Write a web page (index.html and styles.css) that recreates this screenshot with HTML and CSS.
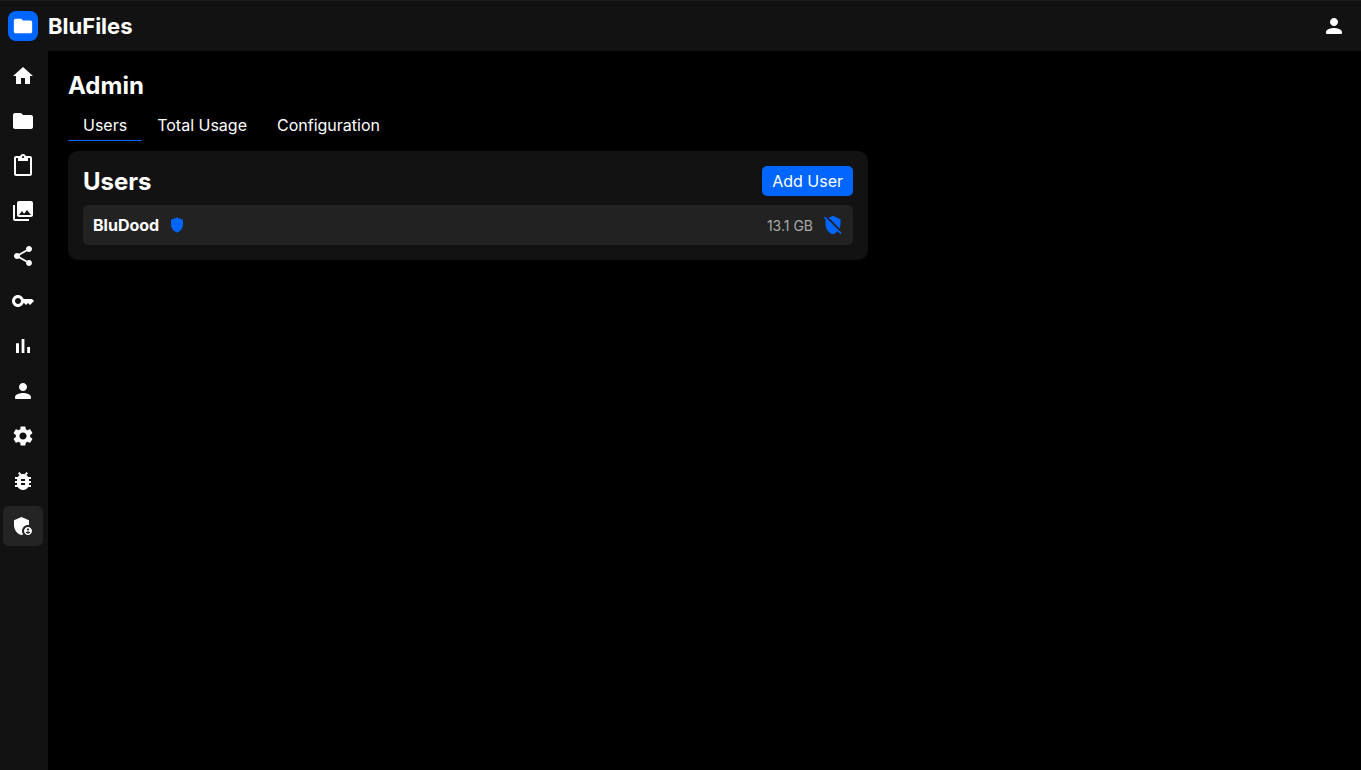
FILE: index.html
```html
<!DOCTYPE html>
<html lang="en">
<head>
    <meta charset="UTF-8">
    <meta name="viewport" content="width=device-width, initial-scale=1.0">
    <title>BluFiles Admin</title>
    <link rel="stylesheet" href="styles.css">
</head>
<body>
    <header class="topbar">
        <div class="brand">
            <div class="brand-logo">
                <svg viewBox="0 0 24 24"><path d="M10 4H4c-1.1 0-1.99.9-1.99 2L2 18c0 1.1.9 2 2 2h16c1.1 0 2-.9 2-2V8c0-1.1-.9-2-2-2h-8l-2-2z"/></svg>
            </div>
            <span class="brand-name">BluFiles</span>
        </div>
        <button class="account-btn">
            <svg viewBox="0 0 24 24"><path d="M12 12c2.21 0 4-1.79 4-4s-1.79-4-4-4-4 1.79-4 4 1.79 4 4 4zm0 2c-2.67 0-8 1.34-8 4v1c0 .55.45 1 1 1h14c.55 0 1-.45 1-1v-1c0-2.66-5.33-4-8-4z"/></svg>
        </button>
    </header>
    <div class="layout">
        <nav class="sidebar">
            <a class="nav-item"><svg viewBox="0 0 24 24"><path d="M10 20v-6h4v6h5v-8h3L12 3 2 12h3v8z"/></svg></a>
            <a class="nav-item"><svg viewBox="0 0 24 24"><path d="M10 4H4c-1.1 0-1.99.9-1.99 2L2 18c0 1.1.9 2 2 2h16c1.1 0 2-.9 2-2V8c0-1.1-.9-2-2-2h-8l-2-2z"/></svg></a>
            <a class="nav-item"><svg viewBox="0 0 24 24"><path d="M19 2h-4.18C14.4.84 13.3 0 12 0S9.6.84 9.18 2H5c-1.1 0-2 .9-2 2v16c0 1.1.9 2 2 2h14c1.1 0 2-.9 2-2V4c0-1.1-.9-2-2-2zm-7 0c.55 0 1 .45 1 1s-.45 1-1 1-1-.45-1-1 .45-1 1-1zm7 18H5V4h2v3h10V4h2v16z"/></svg></a>
            <a class="nav-item"><svg viewBox="0 0 24 24"><path d="M22 16V4c0-1.1-.9-2-2-2H8c-1.1 0-2 .9-2 2v12c0 1.1.9 2 2 2h12c1.1 0 2-.9 2-2zm-11-4l2.03 2.71L16 11l4 5H8l3-4zM2 6v14c0 1.1.9 2 2 2h14v-2H4V6H2z"/></svg></a>
            <a class="nav-item"><svg viewBox="0 0 24 24"><path d="M18 16.08c-.76 0-1.44.3-1.96.77L8.91 12.7c.05-.23.09-.46.09-.7s-.04-.47-.09-.7l7.05-4.11c.54.5 1.25.81 2.04.81 1.66 0 3-1.34 3-3s-1.34-3-3-3-3 1.34-3 3c0 .24.04.47.09.7L8.04 9.81C7.5 9.31 6.79 9 6 9c-1.66 0-3 1.34-3 3s1.34 3 3 3c.79 0 1.5-.31 2.04-.81l7.12 4.16c-.05.21-.08.43-.08.65 0 1.61 1.31 2.92 2.92 2.92s2.92-1.31 2.92-2.92-1.31-2.92-2.92-2.92z"/></svg></a>
            <a class="nav-item"><svg viewBox="0 0 24 24"><path d="M21 10h-8.35C11.83 7.67 9.61 6 7 6c-3.31 0-6 2.69-6 6s2.69 6 6 6c2.61 0 4.83-1.67 5.65-4H13l2 2 2-2 2 2 4-4.04L21 10zM7 15c-1.65 0-3-1.35-3-3s1.35-3 3-3 3 1.35 3 3-1.35 3-3 3z"/></svg></a>
            <a class="nav-item"><svg viewBox="0 0 24 24"><path d="M5 9.2h3V19H5zM10.6 5h2.8v14h-2.8zm5.6 8H19v6h-2.8z"/></svg></a>
            <a class="nav-item"><svg viewBox="0 0 24 24"><path d="M12 12c2.21 0 4-1.79 4-4s-1.79-4-4-4-4 1.79-4 4 1.79 4 4 4zm0 2c-2.67 0-8 1.34-8 4v1c0 .55.45 1 1 1h14c.55 0 1-.45 1-1v-1c0-2.66-5.33-4-8-4z"/></svg></a>
            <a class="nav-item"><svg viewBox="0 0 24 24"><path d="M19.14 12.94c.04-.3.06-.61.06-.94 0-.32-.02-.64-.07-.94l2.03-1.58c.18-.14.23-.41.12-.61l-1.92-3.32c-.12-.22-.37-.29-.59-.22l-2.39.96c-.5-.38-1.03-.7-1.62-.94l-.36-2.54c-.04-.24-.24-.41-.48-.41h-3.84c-.24 0-.43.17-.47.41l-.36 2.54c-.59.24-1.13.57-1.62.94l-2.39-.96c-.22-.08-.47 0-.59.22L2.74 8.87c-.12.21-.08.47.12.61l2.03 1.58c-.05.3-.09.63-.09.94s.02.64.07.94l-2.03 1.58c-.18.14-.23.41-.12.61l1.92 3.32c.12.22.37.29.59.22l2.39-.96c.5.38 1.03.7 1.62.94l.36 2.54c.05.24.24.41.48.41h3.84c.24 0 .44-.17.47-.41l.36-2.54c.59-.24 1.13-.56 1.62-.94l2.39.96c.22.08.47 0 .59-.22l1.92-3.32c.12-.22.07-.47-.12-.61l-2.01-1.58zM12 15.6c-1.98 0-3.6-1.62-3.6-3.6s1.62-3.6 3.6-3.6 3.6 1.62 3.6 3.6-1.62 3.6-3.6 3.6z"/></svg></a>
            <a class="nav-item"><svg viewBox="0 0 24 24"><path d="M20 8h-2.81c-.45-.78-1.07-1.45-1.82-1.96L17 4.41 15.59 3l-2.17 2.17C12.96 5.06 12.49 5 12 5c-.49 0-.96.06-1.41.17L8.41 3 7 4.41l1.62 1.63C7.88 6.55 7.26 7.22 6.81 8H4v2h2.09c-.05.33-.09.66-.09 1v1H4v2h2v1c0 .34.04.67.09 1H4v2h2.81c1.04 1.79 2.97 3 5.19 3s4.15-1.21 5.19-3H20v-2h-2.09c.05-.33.09-.66.09-1v-1h2v-2h-2v-1c0-.34-.04-.67-.09-1H20V8zm-6 8h-4v-2h4v2zm0-4h-4v-2h4v2z"/></svg></a>
            <a class="nav-item active"><svg viewBox="0 0 24 24"><path d="M17 11c.34 0 .67.04 1 .09V6.27L10.5 3 3 6.27v4.91c0 4.54 3.2 8.79 7.5 9.82.55-.13 1.08-.32 1.6-.55-.69-.98-1.1-2.17-1.1-3.45 0-3.31 2.69-6 6-6z"/><path d="M17 13c-2.21 0-4 1.79-4 4s1.79 4 4 4 4-1.79 4-4-1.79-4-4-4zm0 1.38c.62 0 1.12.51 1.12 1.12s-.51 1.12-1.12 1.12-1.12-.51-1.12-1.12.5-1.12 1.12-1.12zm0 5.37c-.93 0-1.74-.46-2.24-1.17.05-.72 1.51-1.08 2.24-1.08s2.19.36 2.24 1.08c-.5.71-1.31 1.17-2.24 1.17z"/></svg></a>
        </nav>
        <main class="content">
            <h1 class="page-title">Admin</h1>
            <div class="tabs">
                <button class="tab active">Users</button>
                <button class="tab">Total Usage</button>
                <button class="tab">Configuration</button>
            </div>
            <section class="card">
                <div class="card-header">
                    <h2>Users</h2>
                    <button class="add-btn">Add User</button>
                </div>
                <div class="user-row">
                    <div class="user-info">
                        <span class="user-name">BluDood</span>
                        <svg class="badge-icon" viewBox="0 0 24 24"><path d="M12 2L4 5v6.09c0 5.05 3.41 9.76 8 10.91 4.59-1.15 8-5.86 8-10.91V5l-8-3z"/></svg>
                    </div>
                    <div class="user-meta">
                        <span class="user-usage">13.1 GB</span>
                        <svg class="remove-icon" viewBox="0 0 24 24"><path d="M22.27 21.73l-3.54-3.55L5.78 5.23 2.27 1.72 1 2.99 3.01 5H3v6c0 5.55 3.84 10.74 9 12 2.16-.53 4.08-1.76 5.6-3.41L21 23l1.27-1.27zM21 11V5l-9-4-5.07 2.25L19.9 16.22C20.6 14.62 21 12.85 21 11z"/></svg>
                    </div>
                </div>
            </section>
        </main>
    </div>
</body>
</html>
```
FILE: styles.css
```css
* {
    box-sizing: border-box;
}

body {
    font-family: Inter, "Liberation Sans", sans-serif;
    margin: 0;
    background: #000;
    color: #fff;
    height: 100vh;
    overflow: hidden;
    display: flex;
    flex-direction: column;
}

svg {
    fill: currentColor;
    display: block;
}

.topbar {
    height: 51px;
    flex-shrink: 0;
    background: #121212;
    border-top: 1px solid #1c1c1c;
    display: flex;
    justify-content: space-between;
    align-items: center;
    padding: 0 15px 0 8px;
}

.brand {
    display: flex;
    align-items: center;
    gap: 10px;
}

.brand-logo {
    width: 30px;
    height: 30px;
    border-radius: 8px;
    background: #0066ff;
    display: flex;
    justify-content: center;
    align-items: center;
}

.brand-logo svg {
    width: 22px;
    height: 22px;
}

.brand-name {
    font-size: 22px;
    font-weight: 700;
}

.account-btn {
    padding: 0;
    border: none;
    background: transparent;
    color: #fff;
    cursor: pointer;
}

.account-btn svg {
    width: 24px;
    height: 24px;
}

.layout {
    flex: 1;
    display: flex;
    min-height: 0;
}

.sidebar {
    width: 48px;
    flex-shrink: 0;
    background: #121212;
    padding: 5px 3px;
    display: flex;
    flex-direction: column;
    gap: 5px;
}

.nav-item {
    width: 40px;
    height: 40px;
    border-radius: 6px;
    display: flex;
    justify-content: center;
    align-items: center;
    cursor: pointer;
}

.nav-item svg {
    width: 24px;
    height: 24px;
}

.nav-item.active {
    background: #242424;
}

.content {
    flex: 1;
    padding: 20px;
}

.page-title {
    margin: 0;
    font-size: 24px;
    font-weight: 700;
    line-height: 29px;
}

.tabs {
    display: flex;
    margin-top: 10px;
}

.tab {
    padding: 5px 15px;
    height: 31px;
    border: none;
    border-bottom: 1px solid transparent;
    background: transparent;
    color: #fff;
    font-family: inherit;
    font-size: 16px;
    cursor: pointer;
}

.tab.active {
    border-bottom: 1px solid #0066ff;
}

.card {
    width: 800px;
    margin-top: 10px;
    padding: 15px;
    background: #121212;
    border-radius: 10px;
}

.card-header {
    display: flex;
    justify-content: space-between;
    align-items: center;
    margin-bottom: 9px;
}

.card-header h2 {
    margin: 0;
    font-size: 24px;
    font-weight: 700;
}

.add-btn {
    height: 30px;
    padding: 0 10px;
    border: none;
    border-radius: 5px;
    background: #0066ff;
    color: #fff;
    font-family: inherit;
    font-size: 16px;
    cursor: pointer;
}

.user-row {
    height: 40px;
    padding: 0 10px;
    background: #222;
    border-radius: 5px;
    display: flex;
    justify-content: space-between;
    align-items: center;
}

.user-info,
.user-meta {
    display: flex;
    align-items: center;
    gap: 10px;
}

.user-info {
    gap: 9px;
}

.user-name {
    font-size: 16px;
    font-weight: 700;
}

.badge-icon {
    width: 18px;
    height: 18px;
    color: #0066ff;
}

.user-usage {
    font-size: 14px;
    color: #aaa;
}

.remove-icon {
    width: 20px;
    height: 20px;
    color: #0066ff;
}
```
